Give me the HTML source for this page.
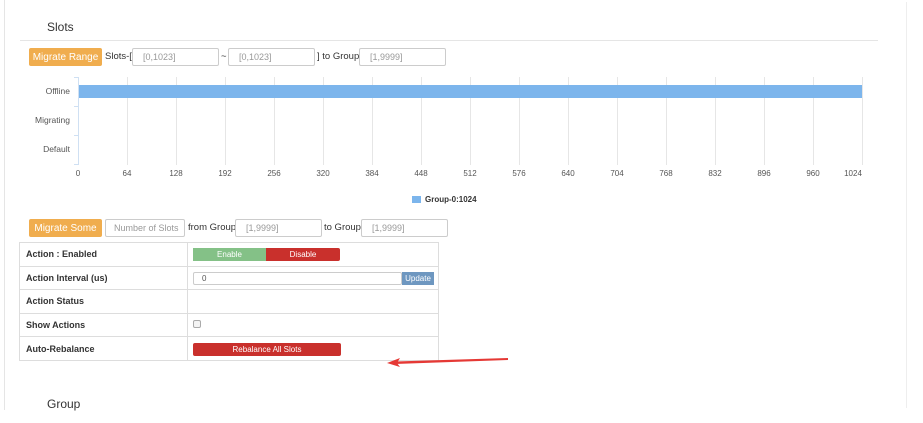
<!DOCTYPE html>
<html><head><meta charset="utf-8"><style>
*{box-sizing:border-box;margin:0;padding:0}
body{width:923px;height:423px;background:#fff;font-family:"Liberation Sans",Arial,sans-serif;position:relative;overflow:hidden;color:#333}
.a{position:absolute}
.btn{position:absolute;background:#f0ad4e;color:#fff;font-size:10px;border-radius:2px;height:18px;display:flex;align-items:center;justify-content:center}
.in{position:absolute;border:1px solid #ccc;border-radius:2px;height:18px;font-size:9px;color:#999;padding-left:10px;display:flex;align-items:center}
.t{position:absolute;font-size:9.5px;color:#333}
.g{position:absolute;width:1px;background:#e6e6e6;top:77px;height:88px}
.xl{position:absolute;top:169px;font-size:8px;color:#555;width:30px;margin-left:-15px;text-align:center}
.yl{position:absolute;font-size:8.5px;color:#555;right:853px}
td{border:1px solid #ddd;font-size:9px;font-weight:bold;padding-left:6px;height:23.6px}
</style></head><body>
<div class="a" style="left:4px;top:0;width:1px;height:410px;background:#e5e5e5"></div>
<div class="a" style="left:906px;top:2px;width:1px;height:406px;background:#eee"></div>
<div class="a" style="left:47px;top:20px;font-size:12px">Slots</div>
<div class="a" style="left:20px;top:40px;width:858px;height:1px;background:#e5e5e5"></div>
<div class="btn" style="left:29px;top:48px;width:73px">Migrate Range</div>
<div class="t" style="left:105px;top:51px">Slots-[</div>
<div class="in" style="left:132px;top:48px;width:87px">[0,1023]</div>
<div class="t" style="left:221px;top:51px">~</div>
<div class="in" style="left:228px;top:48px;width:87px">[0,1023]</div>
<div class="t" style="left:317px;top:51px">] to Group</div>
<div class="in" style="left:359px;top:48px;width:87px">[1,9999]</div>
<div class="a" style="left:78px;top:77px;width:1px;height:88px;background:#cfe0f3"></div>
<div class="a" style="left:74px;top:77px;width:5px;height:1px;background:#cfe0f3"></div>
<div class="a" style="left:74px;top:106px;width:5px;height:1px;background:#cfe0f3"></div>
<div class="a" style="left:74px;top:135px;width:5px;height:1px;background:#cfe0f3"></div>
<div class="a" style="left:74px;top:164px;width:5px;height:1px;background:#cfe0f3"></div>
<div class="g" style="left:127px"></div><div class="g" style="left:176px"></div><div class="g" style="left:225px"></div><div class="g" style="left:274px"></div><div class="g" style="left:323px"></div><div class="g" style="left:372px"></div><div class="g" style="left:421px"></div><div class="g" style="left:470px"></div><div class="g" style="left:519px"></div><div class="g" style="left:568px"></div><div class="g" style="left:617px"></div><div class="g" style="left:666px"></div><div class="g" style="left:715px"></div><div class="g" style="left:764px"></div><div class="g" style="left:813px"></div><div class="g" style="left:862px"></div>
<div class="a" style="left:79px;top:85px;width:783px;height:13px;background:#7cb5ec"></div>
<div class="yl" style="top:86px">Offline</div>
<div class="yl" style="top:115px">Migrating</div>
<div class="yl" style="top:144px">Default</div>
<div class="xl" style="left:78px">0</div><div class="xl" style="left:127px">64</div><div class="xl" style="left:176px">128</div><div class="xl" style="left:225px">192</div><div class="xl" style="left:274px">256</div><div class="xl" style="left:323px">320</div><div class="xl" style="left:372px">384</div><div class="xl" style="left:421px">448</div><div class="xl" style="left:470px">512</div><div class="xl" style="left:519px">576</div><div class="xl" style="left:568px">640</div><div class="xl" style="left:617px">704</div><div class="xl" style="left:666px">768</div><div class="xl" style="left:715px">832</div><div class="xl" style="left:764px">896</div><div class="xl" style="left:813px">960</div><div class="xl" style="left:853px">1024</div>
<div class="a" style="left:412px;top:196px;width:9px;height:7px;background:#7cb5ec"></div>
<div class="a" style="left:425px;top:195px;font-size:8px;font-weight:bold;color:#333">Group-0:1024</div>
<div class="btn" style="left:29px;top:219px;width:73px">Migrate Some</div>
<div class="in" style="left:105px;top:219px;width:80px;padding-left:8px">Number of Slots</div>
<div class="t" style="left:188px;top:222px">from Group</div>
<div class="in" style="left:235px;top:219px;width:87px">[1,9999]</div>
<div class="t" style="left:324px;top:222px">to Group</div>
<div class="in" style="left:361px;top:219px;width:87px">[1,9999]</div>
<table class="a" style="left:19px;top:242px;width:420px;border-collapse:collapse">
<tr><td style="width:168px">Action : Enabled</td><td></td></tr>
<tr><td>Action Interval (us)</td><td></td></tr>
<tr><td>Action Status</td><td></td></tr>
<tr><td>Show Actions</td><td></td></tr>
<tr><td>Auto-Rebalance</td><td></td></tr>
</table>
<div class="a" style="left:193px;top:248px;width:73px;height:13px;background:#84c187;color:#fff;font-size:8px;text-align:center;line-height:13px">Enable</div>
<div class="a" style="left:266px;top:248px;width:74px;height:13px;background:#c9302c;color:#fff;font-size:8px;text-align:center;line-height:13px;border-radius:0 2px 2px 0">Disable</div>
<div class="a" style="left:193px;top:272px;width:209px;height:13px;border:1px solid #ccc;border-radius:2px;font-size:8px;padding-left:8px;line-height:11px;color:#555">0</div>
<div class="a" style="left:402px;top:272px;width:32px;height:13px;background:#6e97c0;color:#fff;font-size:8px;text-align:center;line-height:13px">Update</div>
<div class="a" style="left:193px;top:320px;width:8px;height:8px;border:1px solid #aaa;border-radius:2px;background:#f4f4f4"></div>
<div class="a" style="left:193px;top:343px;width:148px;height:13px;background:#c9302c;color:#fff;font-size:8px;text-align:center;line-height:13px;border-radius:2px">Rebalance All Slots</div>
<svg class="a" style="left:385px;top:355px" width="125" height="14"><path d="M10 6.5 L123 3 L123 5 L10 9 Z" fill="#e53935"/><path d="M2 8 L15 3 L12 8 L15 12 Z" fill="#e53935"/></svg>
<div class="a" style="left:47px;top:397px;font-size:12px">Group</div>
</body></html>
